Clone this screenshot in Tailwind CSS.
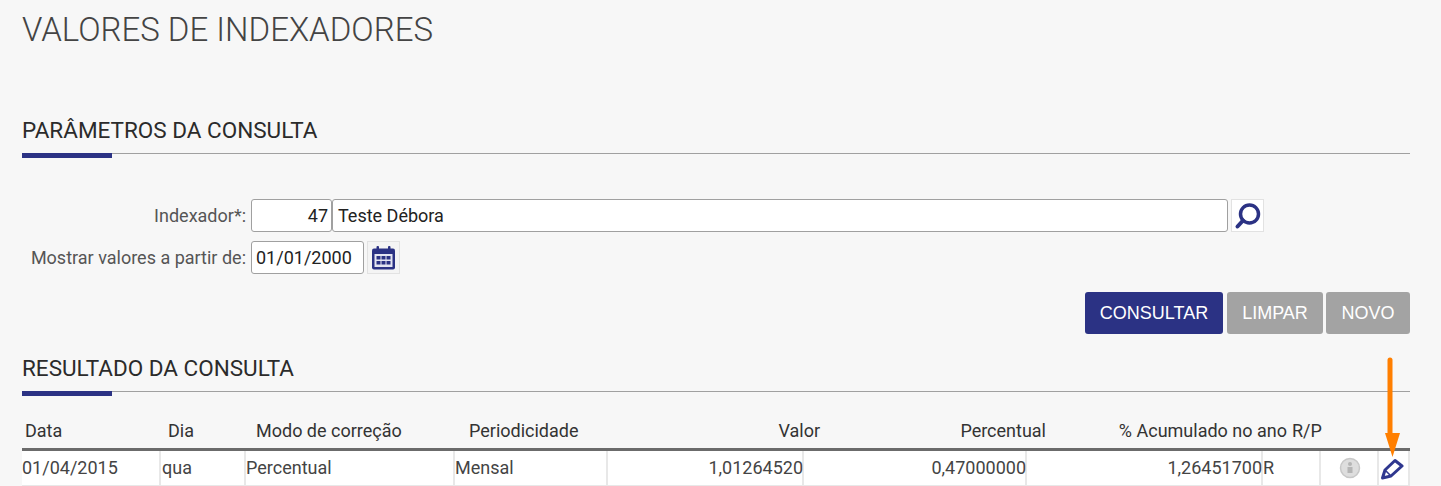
<!DOCTYPE html>
<html>
<head>
<meta charset="utf-8">
<script src="https://cdn.jsdelivr.net/npm/@tailwindcss/browser@4"></script>
</head>
<body class="bg-[#f7f7f7] font-['Roboto',sans-serif] text-[#333]">
<div class="relative h-[486px] w-[1441px] overflow-hidden pl-[22px] pr-[31px]">
  <h1 class="pt-[10px] text-[33px] font-light leading-[40px] text-[#444]">VALORES DE INDEXADORES</h1>

  <section class="mt-[65px]">
    <h2 class="text-[22.5px] font-normal leading-[30px] text-[#2b2b2b]">PARÂMETROS DA CONSULTA</h2>
    <div class="relative mt-[8px] h-[5px] border-t border-[#a0a0a0]"><div class="absolute -top-px left-0 h-[5px] w-[90px] bg-[#2b3284]"></div></div>
  </section>

  <div class="mt-[41px] flex flex-col gap-[9px] text-[18px]">
    <div class="flex h-[33px] items-center">
      <label class="w-[229px] pr-[5px] text-right text-[#555]">Indexador*:</label>
      <div class="flex h-[33px] w-[81px] items-center justify-end rounded-[3px] border border-[#a0a0a0] bg-white pr-[3px] text-[#222]">47</div>
      <div class="flex h-[33px] w-[896px] items-center rounded-[3px] border border-[#a0a0a0] bg-white pl-[5px] text-[#222]">Teste Débora</div>
      <div class="ml-[3px] flex h-[33px] w-[33px] items-center justify-center border border-[#e2e2e2] bg-white">
        <svg width="28" height="28" viewBox="0 0 28 28" fill="none" stroke="#2b3284"><circle cx="15.5" cy="12" r="9" stroke-width="3.5"/><path d="M9 18.500 3.500 24.500" stroke-width="4" stroke-linecap="round"/></svg>
      </div>
    </div>
    <div class="flex h-[33px] items-center">
      <label class="w-[229px] whitespace-nowrap pr-[5px] text-right text-[#555]">Mostrar valores a partir de:</label>
      <div class="flex h-[33px] w-[113px] items-center rounded-[3px] border border-[#a0a0a0] bg-white pl-[4px] text-[#222]">01/01/2000</div>
      <div class="ml-[3px] flex h-[33px] w-[33px] items-center justify-center border border-[#e2e2e2] bg-[#f4f4f4]">
        <svg width="26" height="26" viewBox="0 0 26 26" fill="#2b3284"><rect x="1" y="3.500" width="23" height="21" rx="2"/><path d="M3.500 9h18v13h-18z" fill="#e4e5f2"/><rect x="5.500" y="1" width="2.500" height="4" rx="1"/><rect x="17" y="1" width="2.500" height="4" rx="1"/><rect x="5.500" y="11" width="4" height="3.500"/><rect x="10.500" y="11" width="4" height="3.500"/><rect x="15.500" y="11" width="4" height="3.500"/><rect x="5.500" y="16" width="4" height="3.500"/><rect x="10.500" y="16" width="4" height="3.500"/><rect x="15.500" y="16" width="4" height="3.500"/></svg>
      </div>
    </div>
  </div>

  <div class="mt-[18px] flex justify-end gap-[3px] font-['Liberation_Sans',sans-serif] text-[18px] text-white">
    <button class="h-[42px] w-[138px] rounded-[3px] bg-[#2b3284]">CONSULTAR</button>
    <button class="ml-px h-[42px] w-[96px] rounded-[3px] bg-[#a3a3a3]">LIMPAR</button>
    <button class="h-[42px] w-[84px] rounded-[3px] bg-[#a3a3a3]">NOVO</button>
  </div>

  <section class="mt-[19px]">
    <h2 class="text-[22.5px] font-normal leading-[30px] text-[#2b2b2b]">RESULTADO DA CONSULTA</h2>
    <div class="relative mt-[8px] h-[5px] border-t border-[#a0a0a0]"><div class="absolute -top-px left-0 h-[5px] w-[90px] bg-[#2b3284]"></div></div>
  </section>

  <div class="mt-[22px] text-[18px]">
    <div class="grid h-[30px] grid-cols-[143px_88px_213px_230px_124px_226px_241px_1fr] items-start whitespace-nowrap leading-[26px] text-[#333]">
      <div class="pl-[3px]">Data</div>
      <div class="pl-[3px]">Dia</div>
      <div class="pl-[3px]">Modo de correção</div>
      <div class="pl-[3px]">Periodicidade</div>
      <div class="text-right">Valor</div>
      <div class="text-right">Percentual</div>
      <div class="text-right">% Acumulado no ano</div>
      <div class="pl-[5px]">R/P</div>
    </div>
    <div class="grid h-[38px] grid-cols-[139px_85px_209px_153px_196px_223px_236px_58px_58px_31px] border-y border-t-[3px] border-b-[#e8e8e8] border-t-[#6b6b6b] bg-white leading-[34px] text-[#444]">
      <div class="border-r-2 border-[#e8e8e8]">01/04/2015</div>
      <div class="border-r-2 border-[#e8e8e8] pl-px">qua</div>
      <div class="border-r-2 border-[#e8e8e8]">Percentual</div>
      <div class="border-r-2 border-[#e8e8e8]">Mensal</div>
      <div class="border-r-2 border-[#e8e8e8] text-right"><span class="-mr-px inline-block">1,01264520</span></div>
      <div class="border-r-2 border-[#e8e8e8] text-right"><span class="-mr-px inline-block">0,47000000</span></div>
      <div class="border-r-2 border-[#e8e8e8] text-right"><span class="-mr-px inline-block">1,26451700</span></div>
      <div class="border-r-2 border-[#e8e8e8]">R</div>
      <div class="flex items-center justify-center border-r-2 border-[#e8e8e8] pl-[2px]">
        <svg width="22" height="22" viewBox="0 0 22 22"><circle cx="11" cy="11" r="9.500" fill="#dedede" stroke="#c8c8c8" stroke-width="1.500"/><circle cx="11" cy="7" r="2" fill="#b5b5b5"/><path d="M8.500 10h5v6h-5z" fill="#b5b5b5"/></svg>
      </div>
      <div class="flex items-center justify-center border-r-2 border-[#e8e8e8] pr-[4px]">
        <svg width="24" height="24" viewBox="0 0 24 24" fill="none" stroke="#2f378f" stroke-width="3" stroke-linejoin="round"><path d="M2.500 22 5 14 15 4.500 22 10 11 20Z"/><path d="M5 14 11 20" stroke-width="1.600"/></svg>
      </div>
    </div>
  </div>

  <svg class="absolute left-[1380px] top-[356px]" width="22" height="104" viewBox="0 0 22 104"><path d="M10 4V80" stroke="#ff7f00" stroke-width="5" stroke-linecap="round"/><path d="M5 77H20L12.500 101Z" fill="#ff7f00"/></svg>
</div>
</body>
</html>
